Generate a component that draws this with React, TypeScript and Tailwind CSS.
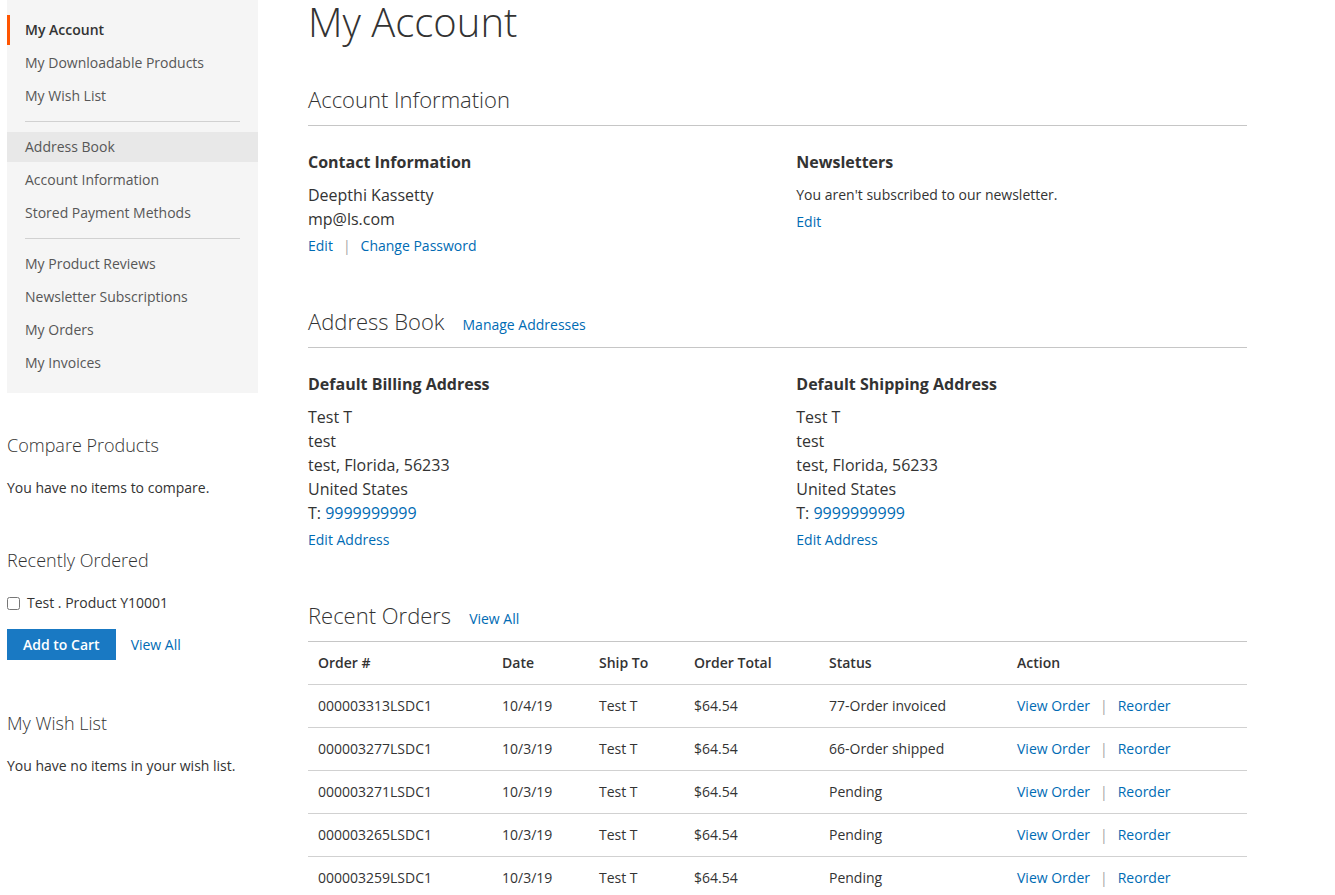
import React from "react";

type NavItem = { label: string; active?: boolean; hl?: boolean };

const navGroups: NavItem[][] = [
  [{ label: "My Account", active: true }, { label: "My Downloadable Products" }, { label: "My Wish List" }],
  [{ label: "Address Book", hl: true }, { label: "Account Information" }, { label: "Stored Payment Methods" }],
  [
    { label: "My Product Reviews" },
    { label: "Newsletter Subscriptions" },
    { label: "My Orders" },
    { label: "My Invoices" },
  ],
];

const orders = [
  { id: "000003313LSDC1", date: "10/4/19", status: "77-Order invoiced" },
  { id: "000003277LSDC1", date: "10/3/19", status: "66-Order shipped" },
  { id: "000003271LSDC1", date: "10/3/19", status: "Pending" },
  { id: "000003265LSDC1", date: "10/3/19", status: "Pending" },
  { id: "000003259LSDC1", date: "10/3/19", status: "Pending" },
];

function Sep() {
  return <span className="mx-[10px] text-[#a6a6a6]">|</span>;
}

function SectionTitle({ title, link }: { title: string; link?: string }) {
  return (
    <div className="flex items-baseline border-b border-[#c6c6c6] pb-[14px]">
      <h2 className="text-[22px] font-light leading-[24px] text-[#333]">{title}</h2>
      {link && <a className="ml-[18px] text-[14px] leading-[16px] text-[#006bb4]">{link}</a>}
    </div>
  );
}

function AddressBox({ title }: { title: string }) {
  return (
    <div className="w-[48%]">
      <h3 className="text-[16px] font-bold leading-[22px] text-[#333]">{title}</h3>
      <div className="mt-[10px] text-[16px] leading-[24px] text-[#333]">
        <div>Test T</div>
        <div>test</div>
        <div>test, Florida, 56233</div>
        <div>United States</div>
        <div>
          T: <a className="text-[#006bb4]">9999999999</a>
        </div>
      </div>
      <div className="mt-[5px] text-[14px] leading-[20px]">
        <a className="text-[#006bb4]">Edit Address</a>
      </div>
    </div>
  );
}

export default function App() {
  return (
    <div className="flex min-h-[895px] bg-white font-['Open_Sans',sans-serif] text-[#333]">
      <aside className="ml-[7px] w-[251px] shrink-0">
        <nav className="bg-[#f5f5f5] py-[15px]">
          {navGroups.map((g, gi) => (
            <div key={gi}>
              {gi > 0 && <div className="mx-[18px] my-[10px] border-t border-[#d1d1d1]" />}
              {g.map((it, i) => (
                <div
                  key={it.label}
                  className={
                    "flex h-[30px] items-center border-l-[3px] pl-[15px] text-[14px] leading-[20px] " +
                    (i > 0 ? "mt-[3px] " : "") +
                    (it.active
                      ? "border-[#ff5501] font-semibold text-[#333] "
                      : "border-transparent text-[#575757] ") +
                    (it.hl ? "bg-[#e8e8e8]" : "")
                  }
                >
                  {it.label}
                </div>
              ))}
            </div>
          ))}
        </nav>

        <div className="mt-[41px] text-[18px] font-light leading-[22px] text-[#333]">Compare Products</div>
        <div className="mt-[22px] text-[14px] leading-[20px]">You have no items to compare.</div>

        <div className="mt-[51px] text-[18px] font-light leading-[22px] text-[#333]">Recently Ordered</div>
        <div className="mt-[22px] flex items-center text-[14px] leading-[20px]">
          <input type="checkbox" className="h-[13px] w-[13px]" />
          <span className="ml-[7px]">Test . Product Y10001</span>
        </div>
        <div className="mt-[16px] flex items-center">
          <button className="h-[31px] bg-[#1979c3] px-[16px] text-[14px] font-semibold leading-[31px] text-white">
            Add to Cart
          </button>
          <a className="ml-[15px] text-[14px] leading-[20px] text-[#006bb4]">View All</a>
        </div>

        <div className="mt-[52px] text-[18px] font-light leading-[22px] text-[#333]">My Wish List</div>
        <div className="mt-[22px] text-[14px] leading-[20px]">You have no items in your wish list.</div>
      </aside>

      <main className="ml-[50px] w-[939px] shrink-0">
        <h1 className="text-[40px] font-light leading-[44px] text-[#333]">My Account</h1>

        <section className="mt-[43px]">
          <SectionTitle title="Account Information" />
          <div className="mt-[25px] flex justify-between">
            <div className="w-[48%]">
              <h3 className="text-[16px] font-bold leading-[22px]">Contact Information</h3>
              <div className="mt-[10px] text-[16px] leading-[24px]">
                <div>Deepthi Kassetty</div>
                <div>mp@ls.com</div>
              </div>
              <div className="mt-[5px] text-[14px] leading-[20px]">
                <a className="text-[#006bb4]">Edit</a>
                <Sep />
                <a className="text-[#006bb4]">Change Password</a>
              </div>
            </div>
            <div className="w-[48%]">
              <h3 className="text-[16px] font-bold leading-[22px]">Newsletters</h3>
              <div className="mt-[10px] text-[14px] leading-[24px]">You aren't subscribed to our newsletter.</div>
              <div className="mt-[5px] text-[14px] leading-[20px]">
                <a className="text-[#006bb4]">Edit</a>
              </div>
            </div>
          </div>
        </section>

        <section className="mt-[53px]">
          <SectionTitle title="Address Book" link="Manage Addresses" />
          <div className="mt-[25px] flex justify-between">
            <AddressBox title="Default Billing Address" />
            <AddressBox title="Default Shipping Address" />
          </div>
        </section>

        <section className="mt-[53px]">
          <SectionTitle title="Recent Orders" link="View All" />
          <table className="w-full table-fixed border-collapse text-[14px] leading-[20px] text-[#333]">
            <thead>
              <tr className="border-b border-[#d1d1d1]">
                <th className="w-[184px] px-[10px] py-[11px] text-left font-semibold">Order #</th>
                <th className="w-[97px] px-[10px] py-[11px] text-left font-semibold">Date</th>
                <th className="w-[95px] px-[10px] py-[11px] text-left font-semibold">Ship To</th>
                <th className="w-[135px] px-[10px] py-[11px] text-left font-semibold">Order Total</th>
                <th className="w-[188px] px-[10px] py-[11px] text-left font-semibold">Status</th>
                <th className="w-[240px] px-[10px] py-[11px] text-left font-semibold">Action</th>
              </tr>
            </thead>
            <tbody>
              {orders.map((o) => (
                <tr key={o.id} className="border-b border-[#d1d1d1]">
                  <td className="px-[10px] py-[11px]">{o.id}</td>
                  <td className="px-[10px] py-[11px]">{o.date}</td>
                  <td className="px-[10px] py-[11px]">Test T</td>
                  <td className="px-[10px] py-[11px]">$64.54</td>
                  <td className="px-[10px] py-[11px]">{o.status}</td>
                  <td className="px-[10px] py-[11px]">
                    <a className="text-[#006bb4]">View Order</a>
                    <Sep />
                    <a className="text-[#006bb4]">Reorder</a>
                  </td>
                </tr>
              ))}
            </tbody>
          </table>
        </section>
      </main>
    </div>
  );
}
